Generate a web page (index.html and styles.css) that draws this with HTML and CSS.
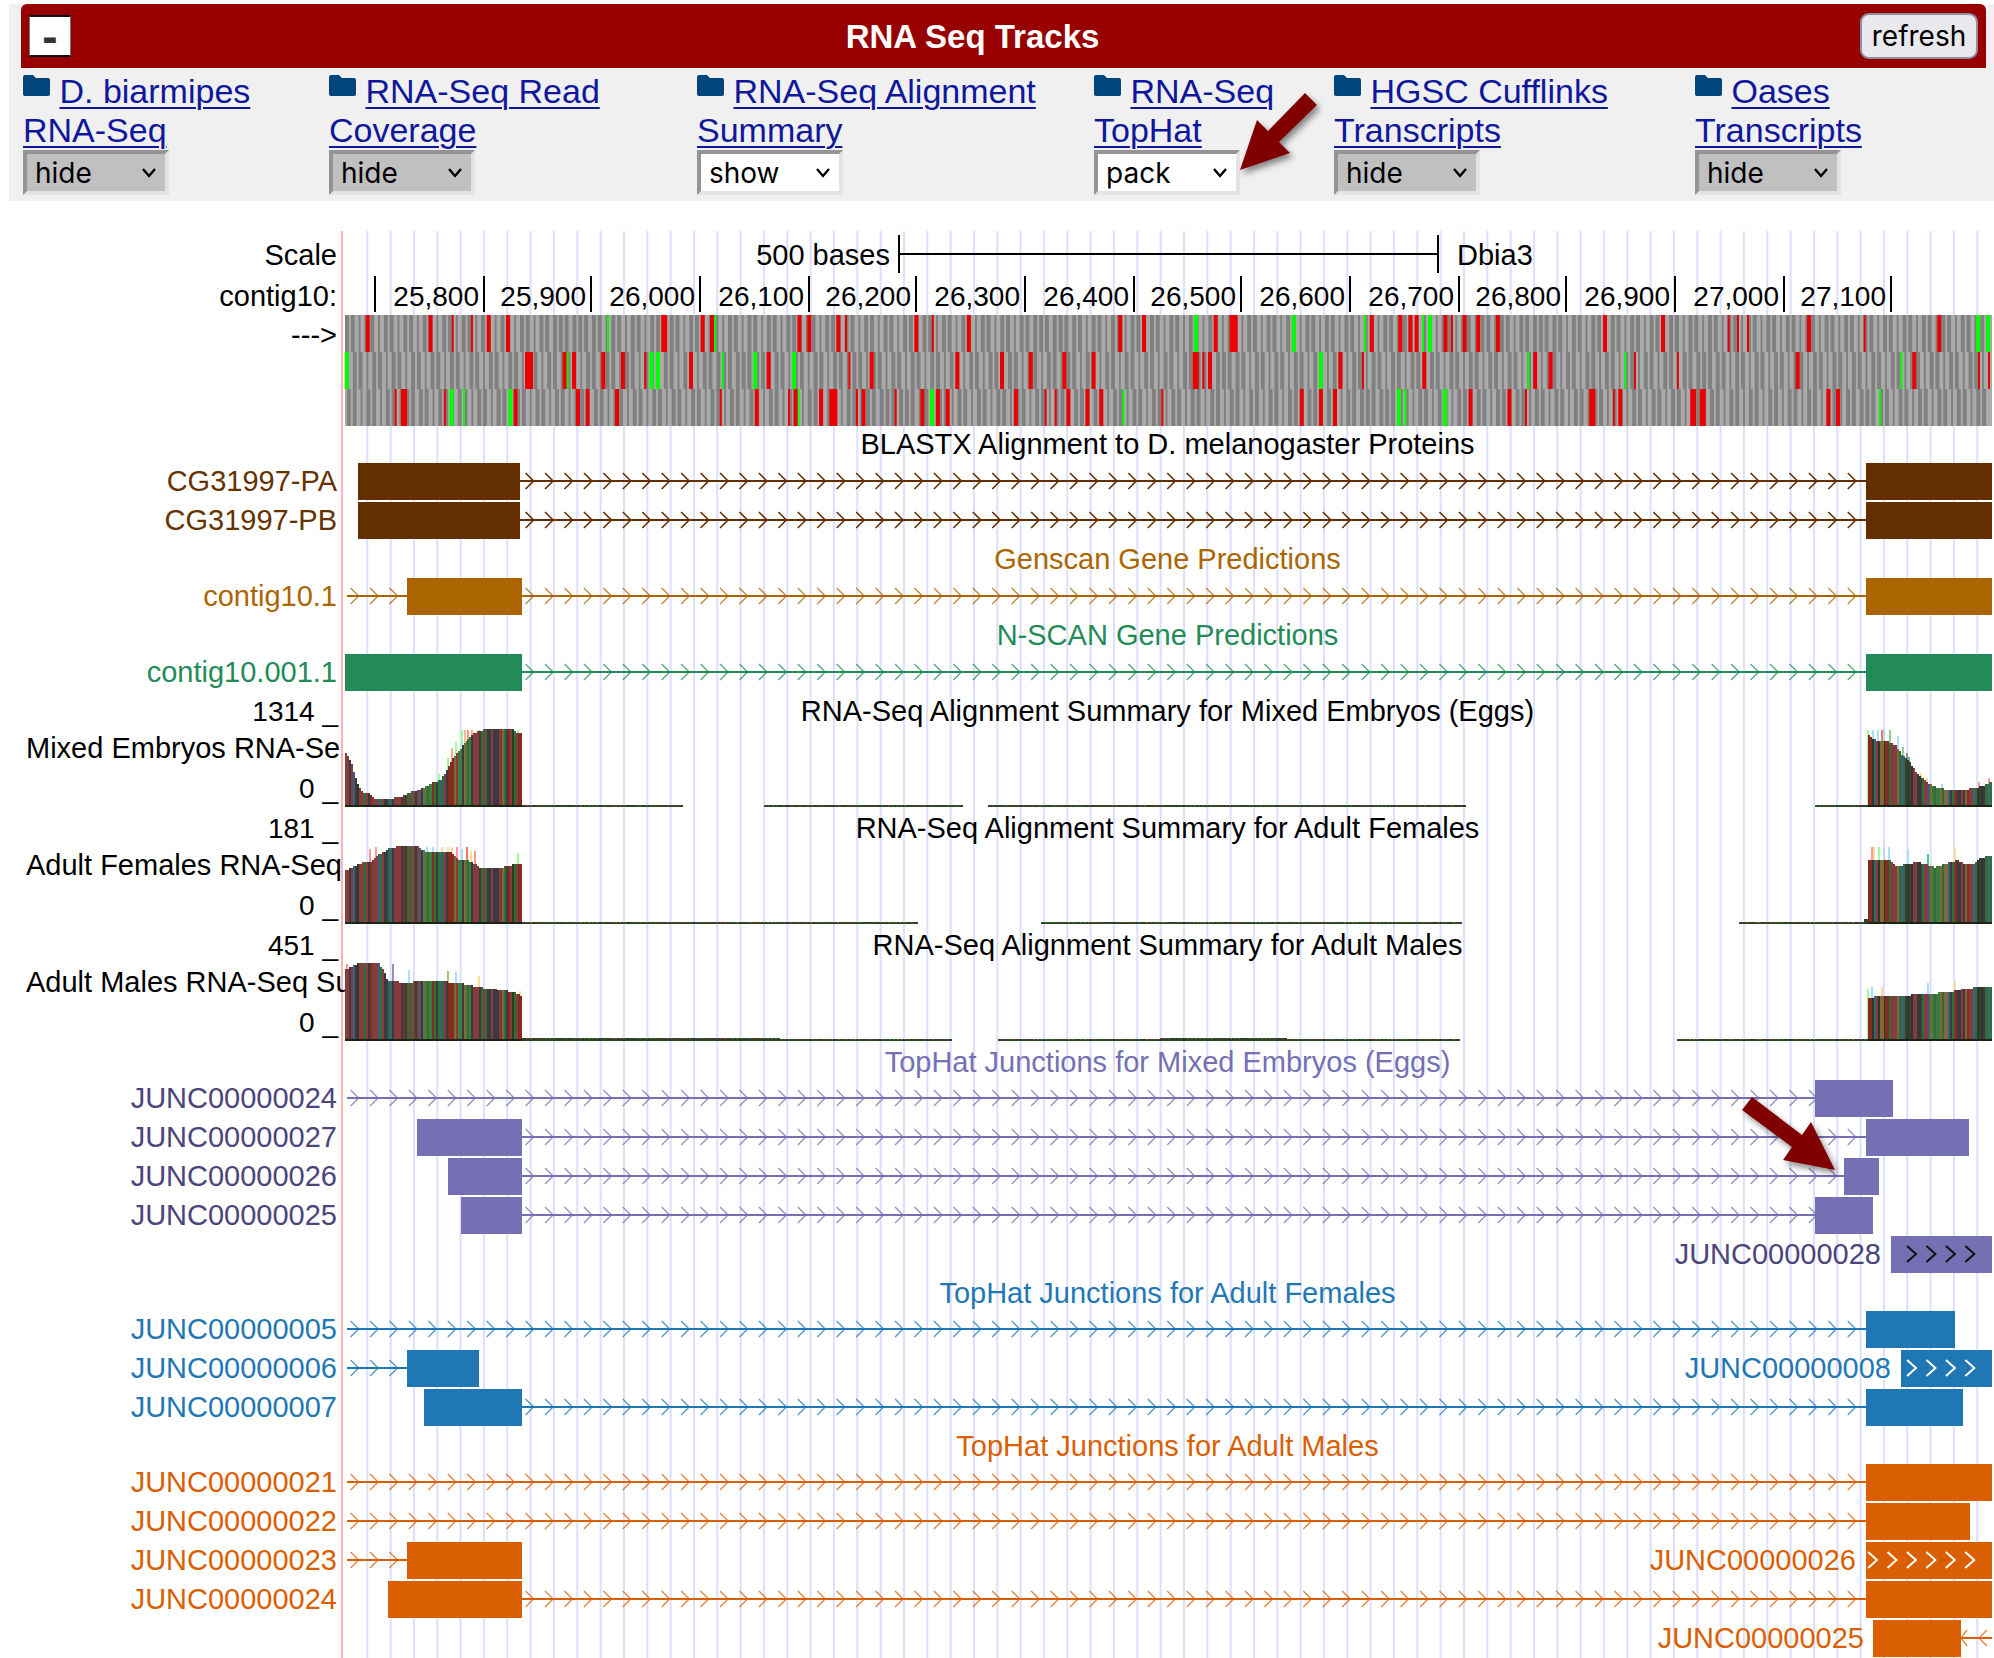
FILE: index.html
```html
<!DOCTYPE html>
<html lang="en">
<head>
<meta charset="utf-8">
<meta name="viewport" content="width=device-width, initial-scale=1">
<title>RNA Seq Tracks</title>
<link rel="stylesheet" href="styles.css">
</head>
<body>
<svg width="0" height="0" class="defs" aria-hidden="true">
  <symbol id="folder" viewBox="0 0 27 21"><path fill="#00457c" d="M2 0H10L13 3H25Q27 3 27 5V19Q27 21 25 21H2Q0 21 0 19V2Q0 0 2 0Z"/></symbol>
</svg>

<section class="group">
  <header class="group-bar">
    <button class="collapse" type="button" aria-label="Collapse group">-</button>
    <h1>RNA Seq Tracks</h1>
    <button class="refresh" type="button">refresh</button>
  </header>
  <div class="controls">
    <div class="control">
      <svg class="folder"><use href="#folder"/></svg> <a href="#biarmipes">D. biarmipes<br>RNA-Seq</a>
      <select class="off" aria-label="D. biarmipes RNA-Seq"><option>hide</option><option>show</option></select>
    </div>
    <div class="control">
      <svg class="folder"><use href="#folder"/></svg> <a href="#coverage">RNA-Seq Read<br>Coverage</a>
      <select class="off" aria-label="RNA-Seq Read Coverage"><option>hide</option><option>show</option></select>
    </div>
    <div class="control">
      <svg class="folder"><use href="#folder"/></svg> <a href="#summary">RNA-Seq Alignment<br>Summary</a>
      <select aria-label="RNA-Seq Alignment Summary"><option>show</option><option>hide</option></select>
    </div>
    <div class="control">
      <svg class="folder"><use href="#folder"/></svg> <a href="#tophat">RNA-Seq<br>TopHat</a>
      <select aria-label="RNA-Seq TopHat"><option>pack</option><option>hide</option></select>
      <svg class="pointer pointer-select" viewBox="0 0 78 78" aria-hidden="true"><path d="M65 0L77 12L39 49L50 60L0 77L17 27L28 38Z"/></svg>
    </div>
    <div class="control">
      <svg class="folder"><use href="#folder"/></svg> <a href="#cufflinks">HGSC Cufflinks<br>Transcripts</a>
      <select class="off" aria-label="HGSC Cufflinks Transcripts"><option>hide</option><option>show</option></select>
    </div>
    <div class="control">
      <svg class="folder"><use href="#folder"/></svg> <a href="#oases">Oases<br>Transcripts</a>
      <select class="off" aria-label="Oases Transcripts"><option>hide</option><option>show</option></select>
    </div>
  </div>
</section>

<main class="browser">
  <svg class="gridlines" id="gridlines" viewBox="341 0 1653 10" preserveAspectRatio="none" aria-hidden="true"></svg>

  <div class="row scale-row">
    <span class="label">Scale</span>
    <div class="plot scale">
      <span class="scale-size">500 bases</span>
      <svg class="scale-bar" viewBox="0 0 541 40" preserveAspectRatio="none" aria-hidden="true"><path d="M1 0V38M540 0V38M0 19H541"/></svg>
      <span class="scale-db">Dbia3</span>
    </div>
  </div>
  <div class="row ruler-row">
    <span class="label">contig10:</span>
    <div class="plot ruler">
      <span></span><span>25,800</span><span>25,900</span><span>26,000</span><span>26,100</span><span>26,200</span><span>26,300</span><span>26,400</span><span>26,500</span><span>26,600</span><span>26,700</span><span>26,800</span><span>26,900</span><span>27,000</span><span>27,100</span>
    </div>
  </div>
  <div class="row codons">
    <span class="label">---&gt;</span>
    <div class="plot"><svg id="codons" viewBox="341 0 1653 111" preserveAspectRatio="none" aria-hidden="true"></svg></div>
  </div>

  <section class="track brown">
    <h2>BLASTX Alignment to D. melanogaster Proteins</h2>
    <div class="row"><span class="label">CG31997-PA</span><div class="plot" data-line="520 1866" data-boxes="358-520 1866-1992"></div></div>
    <div class="row"><span class="label">CG31997-PB</span><div class="plot" data-line="520 1866" data-boxes="358-520 1866-1992"></div></div>
  </section>
  <section class="track ochre">
    <h2>Genscan Gene Predictions</h2>
    <div class="row"><span class="label">contig10.1</span><div class="plot" data-line="347 1866" data-boxes="407-522 1866-1992"></div></div>
  </section>
  <section class="track green">
    <h2>N-SCAN Gene Predictions</h2>
    <div class="row"><span class="label">contig10.001.1</span><div class="plot" data-line="522 1866" data-boxes="345-522 1866-1992"></div></div>
  </section>

  <section class="row wiggle">
    <div class="axis"><span>1314 _</span><span class="name">Mixed Embryos RNA-Se</span><span>0 _</span></div>
    <div class="plot" data-wiggle="embryos"><h2>RNA-Seq Alignment Summary for Mixed Embryos (Eggs)</h2></div>
  </section>
  <section class="row wiggle">
    <div class="axis"><span>181 _</span><span class="name">Adult Females RNA-Seq</span><span>0 _</span></div>
    <div class="plot" data-wiggle="females"><h2>RNA-Seq Alignment Summary for Adult Females</h2></div>
  </section>
  <section class="row wiggle">
    <div class="axis"><span>451 _</span><span class="name">Adult Males RNA-Seq Su</span><span>0 _</span></div>
    <div class="plot" data-wiggle="males"><h2>RNA-Seq Alignment Summary for Adult Males</h2></div>
  </section>

  <section class="track junctions purple">
    <h2>TopHat Junctions for Mixed Embryos (Eggs)</h2>
    <div class="row"><span class="label">JUNC00000024</span><div class="plot" data-line="347 1815" data-boxes="1815-1893"></div></div>
    <div class="row"><span class="label">JUNC00000027</span><div class="plot" data-line="522 1866" data-boxes="417-522 1866-1969"></div></div>
    <div class="row"><span class="label">JUNC00000026</span><div class="plot" data-line="522 1844" data-boxes="448-522 1844-1879"><svg class="pointer pointer-junction" viewBox="0 0 93 73" aria-hidden="true"><path d="M10 0L60 38L69 25L93 73L41 63L50 50L0 13Z"/></svg></div></div>
    <div class="row"><span class="label">JUNC00000025</span><div class="plot" data-line="522 1815" data-boxes="461-522 1815-1873"></div></div>
    <div class="row"><span class="label"></span><div class="plot" data-boxes="1891-1992" data-arrows="1916 4"><span class="item-label" data-end="1881">JUNC00000028</span></div></div>
  </section>
  <section class="track junctions blue">
    <h2>TopHat Junctions for Adult Females</h2>
    <div class="row"><span class="label">JUNC00000005</span><div class="plot" data-line="347 1866" data-boxes="1866-1955"></div></div>
    <div class="row"><span class="label">JUNC00000006</span><div class="plot" data-line="347 407" data-boxes="407-479 1901-1992" data-arrows="1916 4"><span class="item-label" data-end="1891">JUNC00000008</span></div></div>
    <div class="row"><span class="label">JUNC00000007</span><div class="plot" data-line="522 1866" data-boxes="424-522 1866-1963"></div></div>
  </section>
  <section class="track junctions orange">
    <h2>TopHat Junctions for Adult Males</h2>
    <div class="row"><span class="label">JUNC00000021</span><div class="plot" data-line="347 1866" data-boxes="1866-1992"></div></div>
    <div class="row"><span class="label">JUNC00000022</span><div class="plot" data-line="347 1866" data-boxes="1866-1970"></div></div>
    <div class="row"><span class="label">JUNC00000023</span><div class="plot" data-line="347 407" data-boxes="407-522 1866-1992" data-arrows="1877 6"><span class="item-label" data-end="1856">JUNC00000026</span></div></div>
    <div class="row"><span class="label">JUNC00000024</span><div class="plot" data-line="522 1866" data-boxes="388-522 1866-1992"></div></div>
    <div class="row"><span class="label"></span><div class="plot" data-reverse="1961 1992" data-boxes="1873-1961"><span class="item-label" data-end="1864">JUNC00000025</span></div></div>
  </section>
</main>
<script src="tracks.js"></script>
</body>
</html>
```

FILE: styles.css
```css
* { box-sizing: border-box; }

body {
  margin: 0;
  background: #fff;
  color: #000;
  font: 29px/39px "Liberation Sans", Arial, sans-serif;
}

.defs { position: absolute; }

h1, h2 { margin: 0; }

/* Track group header and visibility controls */
.group {
  margin: 4px 0 30px 9px;
  padding: 0 8px 6px 12px;
  background: #f0f0f0;
}

.group-bar {
  display: grid;
  grid-template-columns: 56px 1fr 118px;
  align-items: center;
  height: 64px;
  padding: 0 8px;
  border-radius: 6px 6px 0 0;
  background: #980000;
}

.group-bar h1 {
  color: #fff;
  font-size: 33px;
  text-align: center;
}

.collapse {
  width: 42px;
  height: 42px;
  padding: 0;
  border: 1px solid #777;
  border-block: 2px solid #111;
  background: #fff;
  color: #333;
  font: bold 46px/30px "Liberation Sans", Arial, sans-serif;
}

.refresh {
  height: 46px;
  padding: 0;
  border: 2px solid #8f8f9d;
  border-radius: 9px;
  background: #e9e9ed;
  color: #000;
  font: 28px/40px Inter, sans-serif;
}

.controls {
  display: grid;
  grid-template-columns: 306fr 368fr 397fr 240fr 361fr 291fr;
  padding: 4px 0 0 2px;
}

.control {
  position: relative;
  font-size: 34px;
  white-space: nowrap;
}

.control a {
  color: #0f189c;
  text-decoration-thickness: 2px;
  text-underline-offset: 4px;
}

.folder {
  width: 27px;
  height: 21px;
  vertical-align: 7px;
}

select {
  display: block;
  width: 146px;
  height: 45px;
  padding: 0 8px;
  appearance: none;
  border: 4px solid;
  border-color: #949494 #e3e3e3 #e3e3e3 #949494;
  border-radius: 0;
  background: #fff url("data:image/svg+xml,%3Csvg xmlns='http://www.w3.org/2000/svg' width='16' height='10'%3E%3Cpath d='M2 1L8 8L14 1' fill='none' stroke='black' stroke-width='2.4'/%3E%3C/svg%3E") no-repeat right 8px center;
  color: #000;
  font: 28px Inter, sans-serif;
}

select.off { background-color: #c0c0c0; }

/* Annotation arrows */
.pointer {
  position: absolute;
  overflow: visible;
  fill: #800000;
  filter: drop-shadow(3px 4px 3px rgb(0 0 0 / 45%));
}

.pointer-select {
  left: 146px;
  bottom: 24px;
  width: 78px;
  height: 78px;
}

.pointer-junction {
  right: 9.6%;
  bottom: 27px;
  width: 93px;
  height: 73px;
}

/* Browser image */
.browser {
  position: relative;
  overflow: hidden;
}

.gridlines {
  position: absolute;
  top: 0;
  right: 0;
  width: calc(100% - 341px);
  height: 100%;
}

.row {
  position: relative;
  display: grid;
  grid-template-columns: 341px minmax(0, 1fr);
}

.label {
  padding-right: 4px;
  text-align: right;
  white-space: nowrap;
}

.plot {
  position: relative;
  display: grid;
  grid-template-columns: minmax(0, 1fr);
}

.plot > * { grid-area: 1 / 1; }

.plot > svg:not(.pointer) {
  width: 100%;
  height: 37px;
}

.scale-row { height: 45px; line-height: 48px; }
.ruler-row { height: 39px; line-height: 41px; }
.codons { line-height: 41px; }

.plot.scale { grid-template-columns: 557fr 541fr 555fr; }
.plot.scale > * { grid-area: auto; }
.scale-size { padding-right: 8px; text-align: right; }
.scale-db { padding-left: 18px; }

.plot > svg.scale-bar {
  height: 40px;
  margin-top: 4px;
  fill: none;
  stroke: #000;
  stroke-width: 2;
}

.plot.ruler {
  grid-template-columns: 35fr 109fr 107fr 109fr 109fr 107fr 109fr 109fr 107fr 109fr 109fr 107fr 109fr 109fr 107fr 102fr;
  height: 36px;
  font-size: 28px;
}

.ruler > span {
  grid-area: auto;
  height: 36px;
  padding-right: 4px;
  border-right: 2px solid #000;
  text-align: right;
}

.codons .plot > svg { height: 111px; }

.track { line-height: 37px; }
.track .row { height: 39px; }

.track h2,
.wiggle h2 {
  height: 37px;
  font-size: 29px;
  font-weight: 400;
  line-height: 36px;
  text-align: center;
}

.track h2 { padding-left: 341px; position: relative; }
.track.junctions h2 { height: 36px; }

.item-label { text-align: right; }

.brown { color: #663300; --feature: #632f00; --chevron: #632f00; }
.brown h2 { color: #000; }
.ochre { color: #aa6600; --feature: #aa6400; }
.green { color: #228b57; --feature: #228b57; }
.purple { color: #4b457c; --feature: #756fb3; --mark: #111; }
.purple h2 { color: #756fb3; }
.blue { color: #1f78b4; --feature: #1f78b4; --mark: #fff; }
.orange { color: #d95f02; --feature: #d95f02; --mark: #fff; }

.box, .intron { fill: var(--feature); }
.chevron { fill: none; stroke: var(--feature); stroke-width: 1.4; opacity: .75; }
.brown .chevron { stroke-width: 1.6; opacity: 1; }
.mark { fill: none; stroke: var(--mark); stroke-width: 2; }

/* Wiggle tracks */
.wiggle .plot > svg { height: 117px; }

.axis {
  display: grid;
  grid-template: 37px 37px 43px / minmax(0, 1fr);
  align-items: center;
  padding-right: 3px;
  font-size: 28px;
  line-height: 37px;
  text-align: right;
  white-space: nowrap;
}

.axis .name {
  padding-left: 26px;
  font-size: 29px;
  text-align: left;
}
```

FILE: tracks.js
```js
const NS = 'http://www.w3.org/2000/svg';
const LEFT = 341;
const WIDTH = 1653;
const PIXEL = 1.9444;
const STEP = 10 * PIXEL;

function add(parent, name, attrs) {
  const node = document.createElementNS(NS, name);
  for (const key in attrs) node.setAttribute(key, attrs[key]);
  parent.appendChild(node);
  return node;
}

function canvas(plot, height) {
  const svg = document.createElementNS(NS, 'svg');
  svg.setAttribute('viewBox', `${LEFT} 0 ${WIDTH} ${height}`);
  svg.setAttribute('preserveAspectRatio', 'none');
  svg.setAttribute('aria-hidden', 'true');
  plot.prepend(svg);
  return svg;
}

/* Vertical guide lines */
const guides = document.getElementById('gridlines');
add(guides, 'rect', { x: 341, y: 0, width: 2, height: 10, fill: '#ffb4b4' });
for (let i = 0; i < 70; i++) {
  add(guides, 'rect', { x: 366.3 + i * 12 * PIXEL, y: 0, width: 2, height: 10, fill: '#dedeff' });
}

/* Three reading frames: stop codons red, start codons green, as [centre, width] */
const frames = [
  {
    stops: [[367.7,4],[430.5,4],[452.7,2],[472,2],[488.7,4],[508,4],[664.2,6],[702.6,4],[712,4],[799.4,4],[809.3,4],[838.3,4],[846,2],[916.3,4],[932.8,2],[968.8,4],[1120.3,4],[1144,4],[1215.6,4],[1233.6,8],[1371.8,4],[1400.4,4],[1410.4,4],[1416.6,4],[1445.5,4],[1452,2],[1464.7,4],[1478.2,4],[1497.9,4],[1605,4],[1663,4],[1728.6,2],[1738,2],[1748,2],[1809,4],[1864.6,2],[1939.3,4]],
    starts: [[608,2],[715.2,2],[1196,4],[1293.7,4],[1364.9,2],[1423,2],[1430,4],[1978.2,4],[1988.2,4]]
  },
  {
    stops: [[529,8],[564.6,4],[574,4],[603.3,4],[623,4],[645.2,2],[691,4],[768.6,4],[849.4,2],[871.6,4],[957.3,4],[1002,4],[1030.8,4],[1064.4,4],[1093.5,4],[1195.7,6],[1203.4,2],[1210,4],[1340.4,4],[1363,2],[1424.3,4],[1535.2,4],[1550.6,4],[1635,2],[1677.8,2],[1797.6,4],[1914.3,4],[1979,2],[1989,2]],
    starts: [[346.7,4],[567.5,2],[651.6,4],[658,4],[722.7,2],[755.2,4],[794,4],[1320.9,4],[1528.3,2],[1625.4,2],[1901.6,2]]
  },
  {
    stops: [[395.7,2],[404,6],[444.8,2],[515.5,4],[578,4],[587.5,4],[617,4],[720.8,2],[756.7,4],[789,2],[795.5,4],[821,4],[833.3,8],[857,2],[863.5,4],[895.7,2],[922.5,4],[937.8,4],[947.7,4],[1015.8,4],[1045.7,2],[1055.6,2],[1068.3,4],[1087.4,4],[1101.2,4],[1162.4,2],[1301.7,4],[1320.9,4],[1335,4],[1470.5,4],[1509.4,4],[1526,2],[1592.2,6],[1613.8,2],[1620.3,4],[1693.2,6],[1702.8,6],[1828.4,4],[1838,4]],
    starts: [[451.5,4],[464,2],[510.4,4],[798.6,2],[932,4],[1123.4,2],[1399,4],[1405.4,2],[1445,4],[1880,2]]
  }
];
const codons = document.getElementById('codons');
const snap = x => Math.round((x - 345) / PIXEL) * PIXEL + 345;
frames.forEach((frame, row) => {
  const y = row * 37;
  add(codons, 'rect', { x: 345, y, width: 1647, height: 37, fill: '#aaa' });
  for (let x = 345 + row * 1.08; x < 1988; x += 6.49) {
    add(codons, 'rect', { x: snap(x), y, width: Math.min(snap(x + 3.3), 1992) - snap(x), height: 37, fill: '#808080' });
  }
  for (const [x, w] of frame.starts) add(codons, 'rect', { x: x - w / 2, y, width: w, height: 37, fill: '#00ff00' });
  for (const [x, w] of frame.stops) add(codons, 'rect', { x: x - w / 2, y, width: w, height: 37, fill: '#ea0000' });
});

/* Exon boxes joined by introns that carry strand chevrons */
const numbers = text => text.split(/[ -]/).map(Number);
document.querySelectorAll('.plot[data-boxes]').forEach(plot => {
  const svg = canvas(plot, 37);
  if (plot.dataset.line) {
    const [from, to] = numbers(plot.dataset.line);
    add(svg, 'rect', { class: 'intron', x: from, y: 17, width: to - from, height: 2 });
    let d = '';
    for (let x = 358.6; x < to + 8; x += STEP) {
      if (x - 8 >= from) d += `M${x - 8} 10L${x} 18L${x - 8} 26`;
    }
    add(svg, 'path', { class: 'chevron', d });
  }
  if (plot.dataset.reverse) {
    const [from, to] = numbers(plot.dataset.reverse);
    add(svg, 'rect', { class: 'intron', x: from, y: 17, width: to - from, height: 2 });
    add(svg, 'path', { class: 'chevron', d: `M${from + 6} 10L${from} 18L${from + 6} 26M${from + 26} 10L${from + 18} 18L${from + 26} 26` });
  }
  for (const box of plot.dataset.boxes.split(' ')) {
    const [from, to] = numbers(box);
    add(svg, 'rect', { class: 'box', x: from, y: 0, width: to - from, height: 37 });
  }
  if (plot.dataset.arrows) {
    const [tip, count] = numbers(plot.dataset.arrows);
    for (let i = 0; i < count; i++) {
      const x = tip + i * STEP;
      add(svg, 'path', { class: 'mark', d: `M${x - 9} 10L${x} 18L${x - 9} 26` });
    }
  }
});
document.querySelectorAll('.item-label').forEach(label => {
  label.style.width = `${(label.dataset.end - LEFT) / WIDTH * 100}%`;
});

/* Read coverage: profiles as [x, height], low coverage as [from, to, height], spikes as [x, height, colour] */
const coverage = {
  embryos: {
    profiles: [
      [[345,54],[350,45],[353,34],[358,20],[361,15],[368,13],[374,7],[388,8],[400,10],[412,15],[422,20],[434,25],[441,28],[446,37],[453,50],[459,58],[465,66],[474,74],[483,77],[513,77],[514,75],[522,73]],
      [[1868,71],[1875,67],[1890,65],[1896,61],[1902,52],[1908,45],[1915,35],[1925,26],[1935,20],[1950,17],[1975,19],[1985,23],[1992,27]]
    ],
    low: [[522,683,2],[764,963,2],[988,1466,2],[1815,1868,2]],
    spikes: [[439,33,'#9f9'],[448,49,'#9f9'],[452,59,'#fa8'],[456,65,'#9f9'],[462,77,'#9f9'],[465,77,'#fb9'],[468,77,'#f97'],[472,77,'#fa8'],[479,77,'#ad9'],[518,77,'#9f9'],[1868,77,'#9f9'],[1873,77,'#ade'],[1878,77,'#adf'],[1882,77,'#f75'],[1884,77,'#adf'],[1890,77,'#9c9'],[1898,71,'#adf'],[1903,60,'#9c9'],[1907,54,'#a89'],[1909,50,'#4c8'],[1921,34,'#fd9'],[1927,29,'#fd9'],[1942,23,'#adf'],[1979,25,'#f99'],[1989,29,'#f99']]
  },
  females: {
    profiles: [
      [[345,54],[352,57],[358,61],[370,62],[378,69],[388,75],[396,77],[417,77],[420,74],[432,71],[450,71],[458,64],[470,63],[481,56],[500,56],[513,60],[522,61]],
      [[1868,65],[1888,65],[1895,58],[1915,62],[1925,60],[1935,57],[1948,62],[1958,64],[1963,60],[1972,60],[1978,66],[1992,69]]
    ],
    low: [[522,918,2],[1041,1462,2],[1739,1868,2],[1864,1868,5]],
    spikes: [[370,75,'#f99'],[376,77,'#f99'],[427,77,'#adf'],[433,77,'#adf'],[442,77,'#fd9'],[448,77,'#fd9'],[452,77,'#fd9'],[457,77,'#f99'],[462,75,'#adf'],[467,77,'#f75'],[471,73,'#fd9'],[475,73,'#f99'],[518,71,'#9f9'],[1872,77,'#f99'],[1874,77,'#fd9'],[1879,77,'#9f9'],[1884,77,'#adf'],[1889,77,'#adf'],[1908,75,'#adf'],[1928,70,'#4c8'],[1955,77,'#fd9']]
  },
  males: {
    profiles: [
      [[345,71],[357,77],[378,77],[384,68],[386,61],[396,60],[404,58],[415,60],[440,60],[450,59],[465,57],[478,54],[500,51],[510,49],[517,47],[522,42]],
      [[1868,43],[1875,44],[1900,45],[1930,47],[1950,49],[1965,53],[1992,55]]
    ],
    low: [[522,780,3],[780,952,2],[998,1460,2],[1160,1287,3],[1677,1868,2]],
    spikes: [[347,77,'#f99'],[378,77,'#f99'],[393,77,'#a8a'],[409,71,'#adf'],[448,70,'#9c6'],[456,69,'#adf'],[479,65,'#fd9'],[520,50,'#fd9'],[1868,52,'#9f9'],[1872,54,'#adf'],[1882,54,'#fd9'],[1928,58,'#adf'],[1955,60,'#fd9']]
  }
};

const inks = { r: '#863c3c', b: '#3a6080', g: '#2c7038', k: '#3c3a40', m: '#842c20', o: '#80683c', d: '#2c3c24', l: '#3c7c3c' };
const sequence = 'rrkrbkdrrrgrkmrrrbgrkkgbkrrrrkmkgrgrkrbkolgllmgkgbgrkmmmorllkolglkrrrkgrgkkrkkkrmogkmrdgrmmdbrdoodmmgrrrogbgkdkdrrkdkgrrbolgllogoobkgrmkkrkomrrbgdkdkgblgmllog';

function heightAt(points, x) {
  for (let i = 1; i < points.length; i++) {
    const [x0, h0] = points[i - 1];
    const [x1, h1] = points[i];
    if (x <= x1) return h0 + (h1 - h0) * (x - x0) / (x1 - x0);
  }
  return points[points.length - 1][1];
}

const ink = x => inks[sequence[Math.round((x > 1800 ? x - 1695 : x - 345) / PIXEL) % sequence.length]];

document.querySelectorAll('[data-wiggle]').forEach(plot => {
  const data = coverage[plot.dataset.wiggle];
  const svg = canvas(plot, 117);
  svg.setAttribute('shape-rendering', 'crispEdges');
  const base = 114;
  for (const [x, h, fill] of data.spikes) add(svg, 'rect', { x: x - 1, y: base - h, width: 2, height: h, fill });
  for (const points of data.profiles) {
    const end = points[points.length - 1][0];
    for (let x = points[0][0]; x < end - 1; x += PIXEL) {
      const h = Math.round(heightAt(points, x) / PIXEL) * PIXEL;
      add(svg, 'rect', { x, y: base - h, width: 2, height: h, fill: ink(x) });
    }
    add(svg, 'rect', { x: points[0][0], y: base - 2, width: end - points[0][0], height: 2, fill: '#1c2414' });
  }
  for (const [from, to, h] of data.low) {
    add(svg, 'rect', { x: from, y: base - h, width: to - from, height: h, fill: '#2c4424' });
    for (let x = from; x < to - 4; x += 2 * PIXEL) {
      add(svg, 'rect', { x, y: base - h, width: 2, height: 1, fill: ink(x) });
    }
  }
});
```
